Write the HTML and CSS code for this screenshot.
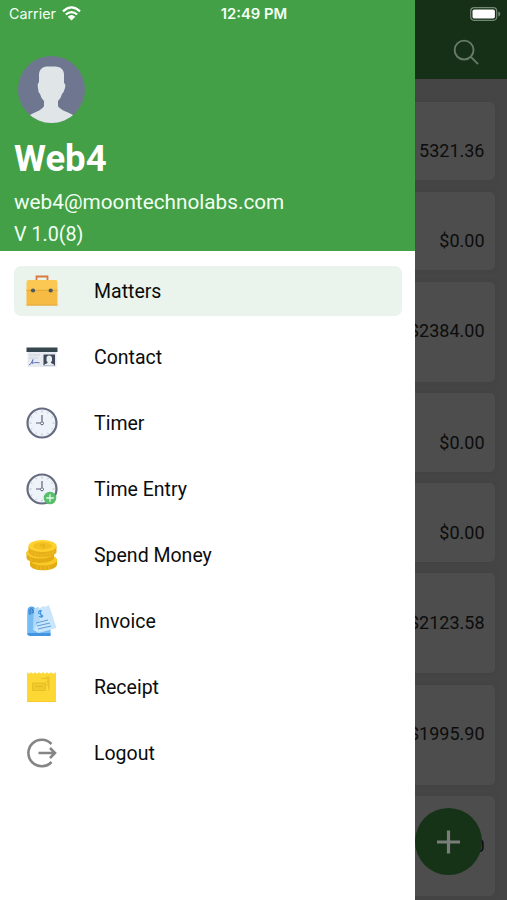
FILE: index.html
```html
<!DOCTYPE html>
<html lang="en">
<head>
<meta charset="utf-8">
<title>Matters</title>
<link rel="stylesheet" href="styles.css">
</head>
<body>
<div class="screen">
  <main class="page">
    <header class="toolbar">
      <svg class="search" viewBox="0 0 28 28"><circle cx="11.500" cy="11.500" r="9.800"/><path d="M18.500 18.500 26 26"/></svg>
    </header>
    <section class="cards">
      <article class="card">5321.36</article>
      <article class="card">$0.00</article>
      <article class="card tall">$2384.00</article>
      <article class="card">$0.00</article>
      <article class="card">$0.00</article>
      <article class="card tall">$2123.58</article>
      <article class="card tall">$1995.90</article>
      <article class="card tall">$0.00</article>
    </section>
    <div class="fab"><svg viewBox="0 0 24 24"><path d="M12 0v24M0 12h24"/></svg></div>
  </main>

  <aside class="drawer">
    <div class="profile">
      <svg class="avatar" viewBox="0 0 67 67">
        <clipPath id="disc"><circle cx="33.500" cy="33.500" r="33.500"/></clipPath>
        <g clip-path="url(#disc)">
          <path fill="#6f7790" d="M0 0h67v67H0z"/>
          <path fill="#e0e6e8" d="M21 26V19C21 13 25 10.500 30 10.500H37C43 10.500 46 14 46 19V27Q48 28 47 32Q46 36 44 38Q43 42 40 45V50C41 53 47 55 55 59L59 67H8L12 59C20 55 25 53 26 50V45Q23 42 22 38Q20 36 20 32Q19 28 21 26Z"/>
        </g>
      </svg>
      <h1 class="name">Web4</h1>
      <p class="email">web4@moontechnolabs.com</p>
      <p class="version">V 1.0(8)</p>
    </div>
    <nav class="menu">
      <a class="item active">
        <svg viewBox="0 0 32 32"><path d="M10.500 6V1.500H21.500V6" fill="none" stroke="#d9793f" stroke-width="1.800"/><path fill="#fbc854" d="M1.500 5h29l1 2v9H.5V7z"/><path fill="#f6bb42" d="M.5 15h31v15.500H.5z"/><path d="M.5 15.200h31M.5 30h31" stroke="#e5a73c"/><circle cx="7" cy="15.500" r="2.100" fill="#4c5861"/><circle cx="24.700" cy="15.500" r="2.100" fill="#4c5861"/></svg>
        <span>Matters</span>
      </a>
      <a class="item">
        <svg viewBox="0 0 32 32"><path fill="#e7eaf0" d="M1.500 10h29v16h-29z"/><path fill="#37474f" d="M.5 6.500h31v4.500H.5z"/><path d="M3 14h11M3 17h9" stroke="#cbd1db"/><path d="m3 24 2-1.500 2-4-1 4 2.500-1 5 .2" fill="none" stroke="#6676bd"/><path fill="#3f4858" d="M17.500 13.500h11.500v11H17.500z"/><path fill="#e8edf2" d="M20.500 17Q20.500 14.500 23.200 14.500T26 17Q26.500 20 25 21v1l3 1.500v1h-9.500v-1L21.500 22v-1Q20 20 20.500 17z"/></svg>
        <span>Contact</span>
      </a>
      <a class="item">
        <svg viewBox="0 0 32 32"><use href="#clock"/></svg>
        <span>Timer</span>
      </a>
      <a class="item">
        <svg viewBox="0 0 32 32"><g id="clock"><circle cx="16" cy="16" r="14.500" fill="#edf3f8" stroke="#666b80" stroke-width="2.200"/><path d="M16 3.500v2M16 26.500v2M3.500 16h2M26.500 16h2M9.700 5.100l.7 1.200M22.300 5.100l-.7 1.200M5.100 9.700l1.200.7M5.100 22.300l1.200-.7M26.900 9.700l-1.200.7M26.900 22.300l-1.200-.7M9.700 26.900l.7-1.200M22.300 26.900l-.7-1.200" stroke="#a9b1be" stroke-width=".8"/><path d="M16 8v6.500M10 16h4.500" stroke="#5d6378" stroke-width="1.200"/><circle cx="16" cy="16.300" r="1.500" fill="#fff" stroke="#5d6378"/></g><circle cx="24" cy="25" r="6.300" fill="#57be69"/><path d="M24 21.200v7.600M20.200 25h7.600" stroke="#e5f8e8" stroke-width="1.300"/></svg>
        <span>Time Entry</span>
      </a>
      <a class="item">
        <svg viewBox="0 0 32 32"><path fill="#e3ac14" d="M4 20.500v6C6 33 29 33 31 26v-6z"/><ellipse cx="17.500" cy="21" rx="13.500" ry="5.500" fill="#f8c927"/><path fill="#e3ac14" d="M.5 13v6c2 6.500 25 6.500 27.500 0v-6z"/><ellipse cx="14.300" cy="14" rx="13.800" ry="5.500" fill="#f9cb29"/><path fill="#e7b018" d="M2.500 7v6c2 7 26 7 28 0V7z"/><ellipse cx="16.500" cy="7" rx="14" ry="6" fill="#ffd12f"/><ellipse cx="16.500" cy="7" rx="9.500" ry="3.700" fill="#f3c020"/><path d="m14 6.500 4-1 1 2-3 1" fill="none" stroke="#dfac1c"/><path d="M6 12v3M9 13.500v3M12 14.500v3M15 15v3M18 15v3M21 14.500v3M24 13.500v3M27 12v3M11 27v3M15 27.500v3M19 27.500v3M23 27v3M5 19v3" stroke="#f2c229" stroke-width=".8"/></svg>
        <span>Spend Money</span>
      </a>
      <a class="item">
        <svg viewBox="0 0 32 32"><path fill="#55a5e9" d="M1.500 6Q1.500 1.500 5.500 1.500T9 5v25H1.500z"/><path fill="#76bdf3" d="M1.500 9h23v22H4.500q-3 0-3-3z"/><path fill="#4295e0" d="M1.500 28h23v3H4.500q-3 0-3-3z"/><path fill="#c9e6fc" d="m8 4 4-2 2 1 3-2 2 1 4-2 7.500 23-18 5-5-3z"/><path fill="#b0d8fa" d="m8 4 4-2 2 13-7 11z"/><path d="m10 18 12-3M11 21l13-3M12 24l13-3" stroke="#5b9ed7"/><path d="M16 6c-3-1-5 2-2 3s4 3 1 3l-2-.5M14 5l1.500 8" fill="none" stroke="#3c93df" stroke-width="1.100"/><path d="M4 10V5q1.500-3 3 0v3" fill="none" stroke="#3478bd"/></svg>
        <span>Invoice</span>
      </a>
      <a class="item">
        <svg viewBox="0 0 32 32"><path fill="#fdd835" d="M1 1q2 3 4 0 2 3 4 0 2 3 4 0 2 3 4 0 2 3 4 0 2 3 4 0 2 3 5 0v30H1z"/><path d="M1 30.500h29" stroke="#f8ca2e"/><path d="M6.500 12h13v7.500h-13zM15 7.500h6M20 6h3v13.500" fill="#f0c92b" stroke="#e3bb25" stroke-width=".8"/><path d="M20 11h3M20 14h3M9 15.500h8" stroke="#dcb528" stroke-width=".7"/></svg>
        <span>Receipt</span>
      </a>
      <a class="item">
        <svg viewBox="0 0 32 32"><path d="M25.500 7A13.300 13.300 0 1 0 25.500 25M12.500 16H29M24 11l5 5-5 5" fill="none" stroke="#858585" stroke-width="2.600"/></svg>
        <span>Logout</span>
      </a>
    </nav>
  </aside>

  <div class="status">
    <div class="carrier">Carrier
      <svg viewBox="0 0 20 15"><path d="M1 5.300Q10-3 19 5.300M4 8.600Q10 3.400 16 8.600" fill="none" stroke="#fff" stroke-width="2.300"/><path fill="#fff" d="M6 10.800q4-3.400 8 0l-4 4z"/></svg>
    </div>
    <div class="time">12:49 PM</div>
    <svg class="battery" viewBox="0 0 31 14"><rect x=".7" y=".7" width="26" height="12.600" rx="3.500" fill="none" stroke="#758875" stroke-width="1.200"/><rect x="2.500" y="2.500" width="22.400" height="9" rx="1.800" fill="#fff"/><path fill="#758875" d="M28.300 4.500q2 .8 2 2.500t-2 2.500z"/></svg>
  </div>
</div>
</body>
</html>
```
FILE: styles.css
```css
* { box-sizing: border-box; }

body, h1, p { margin: 0; }

body {
  font-family: Roboto, "Liberation Sans", sans-serif;
  color: #0c0c0c;
}

.screen {
  position: relative;
  width: 507px;
  height: 900px;
  overflow: hidden;
  background: #464545;
}

.toolbar {
  display: flex;
  justify-content: flex-end;
  height: 79px;
  padding: 39px 27px 0 0;
  background: #153016;
}

.search {
  width: 27px;
  height: 27px;
  fill: none;
  stroke: #687969;
  stroke-width: 2;
}

.cards {
  display: flex;
  flex-direction: column;
  gap: 11.5px;
  padding: 22.6px 12.5px 0;
}

.card {
  flex: none;
  height: 78.5px;
  padding: 37.8px 10px 0 0;
  border-radius: 5px;
  background: #4d4d4d;
  box-shadow: 0 0 4px #434242;
  font-size: 18px;
  line-height: 23px;
  text-align: right;
}

.tall { height: 100px; }

.fab {
  position: absolute;
  left: 415px;
  top: 808px;
  display: grid;
  place-items: center;
  width: 67px;
  height: 67px;
  border-radius: 50%;
  background: #163317;
}

.fab svg {
  width: 23px;
  height: 24px;
  stroke: #7a7e7a;
  stroke-width: 3.3;
}

.drawer {
  position: absolute;
  inset: 0 auto 0 0;
  width: 415.4px;
  background: #fff;
}

.profile {
  height: 251px;
  padding: 56px 14px 0;
  background: #43a047;
  color: #fff;
}

.avatar {
  display: block;
  width: 67px;
  height: 67px;
  margin-left: 4px;
}

.name {
  margin-top: 14px;
  font-size: 36.5px;
  line-height: 44px;
}

.email, .version {
  font-size: 19.7px;
  line-height: 32px;
  color: #f2fff2;
}

.email {
  margin-top: 5px;
  font-size: 20.75px;
}

.version { margin-top: 1px; }

.menu {
  display: flex;
  flex-direction: column;
  gap: 16px;
  padding: 15px 13.5px 15px 14px;
}

.item {
  display: flex;
  align-items: center;
  gap: 36px;
  height: 50px;
  padding-left: 12px;
  border-radius: 7px;
  font-size: 19.5px;
}

.item svg {
  width: 32px;
  height: 32px;
}

.active { background: #eaf4ec; }

.status {
  position: absolute;
  inset: 0 0 auto;
  display: grid;
  grid-template-columns: 1fr auto 1fr;
  align-items: center;
  height: 27px;
  padding: 0 7px 0 8px;
  color: #f4fff4;
  font: 14.8px Inter, sans-serif;
}

.carrier {
  display: flex;
  align-items: center;
  gap: 6px;
  padding-left: 1px;
  font-size: 14.3px;
}

.carrier svg {
  width: 19px;
  height: 15px;
}

.time { font-weight: 600; }

.battery {
  justify-self: end;
  width: 31px;
  height: 14px;
  margin-right: -1px;
}
```
